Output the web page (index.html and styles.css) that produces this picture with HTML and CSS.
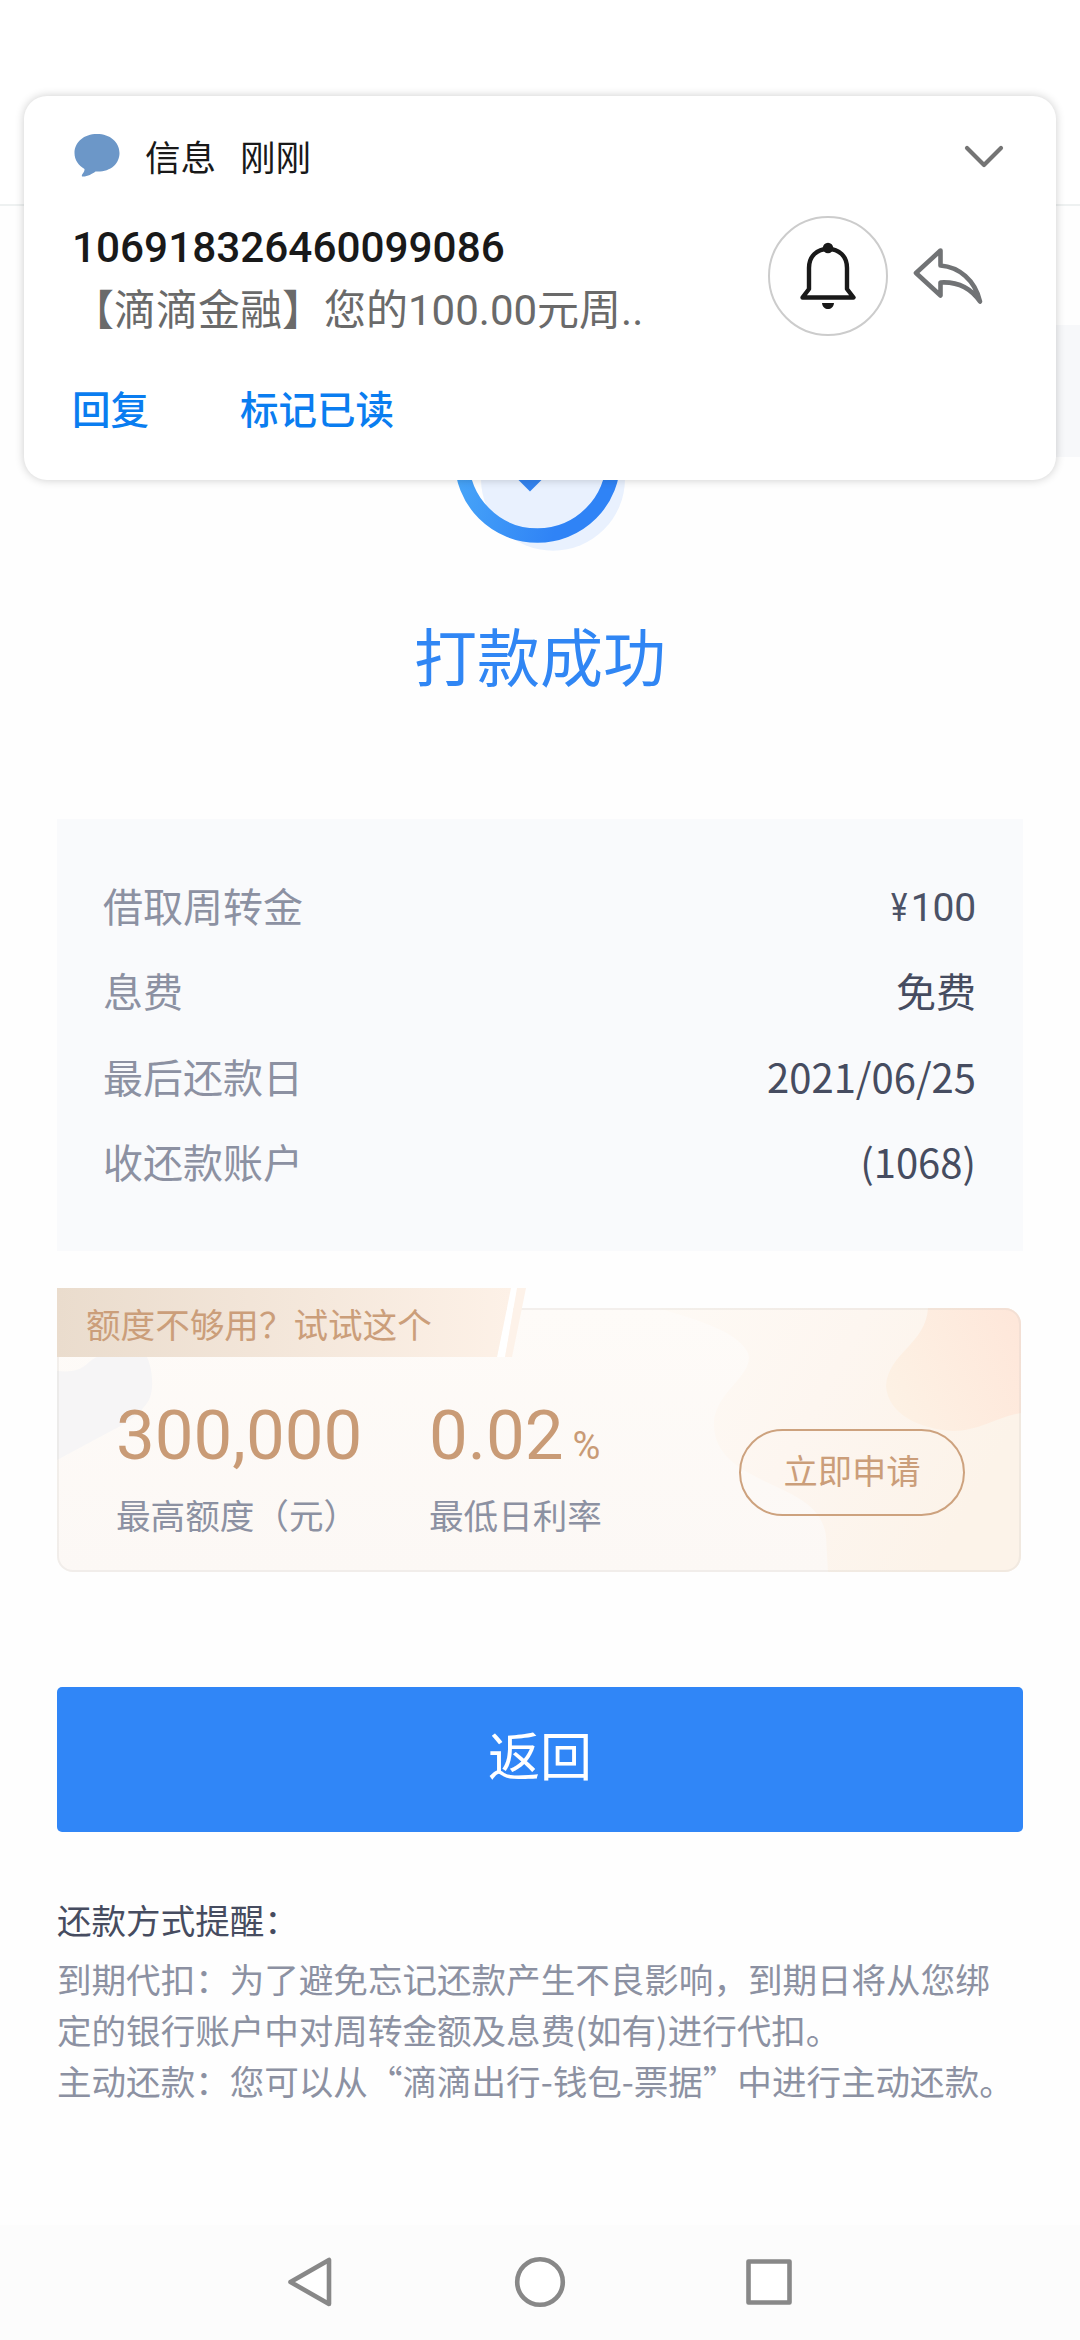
FILE: index.html
```html
<!DOCTYPE html>
<html lang="zh-CN">
<head>
<meta charset="utf-8">
<title>打款成功</title>
<link rel="stylesheet" href="styles.css">
</head>
<body>
<div class="screen">
  <header class="topbar"></header>
  <main class="page">
    <div class="strip"></div>
    <svg class="status-icon" width="180" height="184" viewBox="450 370 180 184">
      <defs>
        <linearGradient id="ring" x1="0" y1="0.3" x2="1" y2="0.6">
          <stop offset="0" stop-color="#4aa8f8"/>
          <stop offset="0.75" stop-color="#2f83f6"/>
        </linearGradient>
      </defs>
      <circle cx="553" cy="478.7" r="72" fill="#e9f1fe"/>
      <circle cx="537.5" cy="460" r="75.6" fill="none" stroke="url(#ring)" stroke-width="14.5"/>
      <path d="M498 451L530 483L580 433" fill="none" stroke="#3484f0" stroke-width="12"/>
    </svg>
    <h1 class="title">打款成功</h1>

    <dl class="details">
      <div class="row"><dt>借取周转金</dt><dd class="amount"><span>¥</span>100</dd></div>
      <div class="row"><dt>息费</dt><dd>免费</dd></div>
      <div class="row"><dt>最后还款日</dt><dd>2021/06/25</dd></div>
      <div class="row"><dt>收还款账户</dt><dd>(1068)</dd></div>
    </dl>

    <section class="promo">
      <svg class="promo-art" width="964" height="264" viewBox="0 0 964 264">
        <defs>
          <linearGradient id="wave" x1="0" y1="0" x2="1" y2="0.4">
            <stop offset="0" stop-color="#fefaf5"/>
            <stop offset="0.5" stop-color="#fdf6f0"/>
            <stop offset="1" stop-color="#fcf3e9"/>
          </linearGradient>
          <linearGradient id="petal" x1="0" y1="0.6" x2="1" y2="0.2">
            <stop offset="0" stop-color="#fdf1e4"/>
            <stop offset="1" stop-color="#fee7da"/>
          </linearGradient>
        </defs>
        <path d="M600 0C650 14 682 26 691 45C698 66 661 82 657 112C656 136 667 150 690 164C722 183 764 190 769 228L771 264H964V0Z" fill="url(#wave)"/>
        <path d="M871 0C869 36 831 45 829 78C831 106 862 121 896 123C922 123 940 109 964 105V0Z" fill="url(#petal)"/>
        <path d="M0 63C28 66 28 54 40 49H90C96 62 97 82 92 92C84 106 68 116 54 123L0 152Z" fill="#f6f5f6"/>
      </svg>
      <div class="ribbon">
        <svg class="ribbon-art" width="470" height="69" viewBox="0 0 470 69">
          <defs>
            <linearGradient id="tab" x1="0" y1="0" x2="1" y2="0">
              <stop offset="0" stop-color="#eadccd"/>
              <stop offset="1" stop-color="#fdf1e7"/>
            </linearGradient>
          </defs>
          <path d="M454 0H460L448 69H440Z" fill="#fff"/>
          <path d="M0 0H454L440 69H0Z" fill="url(#tab)"/>
          <path d="M460 0H469L455 69H448Z" fill="#fdf2e9"/>
        </svg>
        <span class="ribbon-text">额度不够用？试试这个</span>
      </div>
      <div class="promo-body">
        <div class="stat stat-limit"><div class="figure">300,000</div><div class="caption">最高额度（元）</div></div>
        <div class="stat stat-rate"><div class="figure">0.02<small>%</small></div><div class="caption">最低日利率</div></div>
        <button class="apply">立即申请</button>
      </div>
    </section>

    <button class="back">返回</button>

    <section class="notes">
      <h2>还款方式提醒：</h2>
      <p>到期代扣：为了避免忘记还款产生不良影响，到期日将从您绑<br>定的银行账户中对周转金额及息费(如有)进行代扣。</p>
      <p>主动还款：您可以从“滴滴出行-钱包-票据”中进行主动还款。</p>
    </section>
  </main>

  <nav class="navbar">
    <svg width="50" height="56" viewBox="0 0 50 56"><path d="M43 6V50L4.500 28Z" class="nav-line"/></svg>
    <svg width="56" height="56" viewBox="0 0 56 56"><circle cx="28" cy="28" r="22.800" class="nav-line"/></svg>
    <svg width="50" height="56" viewBox="0 0 50 56"><rect x="4.500" y="7.500" width="41" height="41" class="nav-line"/></svg>
  </nav>

  <aside class="notice">
    <div class="notice-head">
      <svg width="46" height="44" viewBox="0 0 46 44"><path d="M23 0C10 0 .5 8 .5 19C.5 26 4.500 31.500 10.500 35C11 38 7 40.500 8 42.500C13 43 18 40 21.500 37.500C36 38.500 45.500 30 45.500 19C45.500 8 36 0 23 0Z" fill="#6c97c8"/></svg>
      <span class="app">信息</span><span class="when">刚刚</span>
      <svg class="chevron" width="40" height="24" viewBox="0 0 40 24"><path d="M3 4L20 21L37 4" fill="none" stroke="#747474" stroke-width="4.200" stroke-linecap="round" stroke-linejoin="round"/></svg>
    </div>
    <div class="notice-main">
      <div class="notice-text">
        <div class="sender">106918326460099086</div>
        <div class="message">【滴滴金融】您的100.00元周..</div>
      </div>
      <div class="bell">
        <svg width="60" height="70" viewBox="0 0 60 70">
          <circle cx="30" cy="7" r="5.200" fill="#191919"/>
          <path d="M11 48V27C11 15 19 8 30 8S49 15 49 27V48L55.500 56.500H4.500Z" fill="none" stroke="#191919" stroke-width="4.400" stroke-linejoin="round"/>
          <path d="M24 62H36C35.500 66 33 68 30 68S24.500 66 24 62Z" fill="#191919"/>
        </svg>
      </div>
      <svg class="reply" width="74" height="60" viewBox="0 0 74 60"><path d="M28.500 4.500L4 27L28.500 49.500V36.500C45 35.500 58 41 68 55.500C63 34 47 21 28.500 19.500Z" fill="none" stroke="#717375" stroke-width="4.600" stroke-linejoin="round"/></svg>
    </div>
    <div class="notice-actions"><span>回复</span><span>标记已读</span></div>
  </aside>
</div>
</body>
</html>
```
FILE: styles.css
```css
* { box-sizing: border-box; margin: 0; padding: 0; }
body { width: 1080px; height: 2340px; background: #fff; font-family: "Noto Sans CJK SC", sans-serif; overflow: hidden; }
button { font: inherit; }
svg { display: block; flex: none; }

.screen { position: relative; width: 1080px; height: 2340px; display: flex; flex-direction: column; }
.topbar { height: 206px; flex: none; border-bottom: 2px solid #eef1f1; }
.page { flex: 1; display: flex; flex-direction: column; padding: 0 57px; background: #fefefe; }

.strip { flex: none; height: 132px; margin: 119px -57px 0 480px; background: #f7f8fa; }
.status-icon { margin: -87px 0 0 393px; }
.title { margin-top: 60px; height: 80px; line-height: 80px; text-align: center; font-size: 63px; font-weight: 400; color: #3086f4; }

.details { margin-top: 125px; height: 432px; padding: 43px 47px 0 46px; background: #f9fafc; }
.row { display: flex; justify-content: space-between; height: 85.300px; line-height: 86px; font-size: 40px; color: #8c91a2; }
.row dd { color: #464c60; }
.row .amount { display: flex; align-items: baseline; padding-top: 3px; font-family: Roboto, sans-serif; font-size: 39px; letter-spacing: -.2px; font-weight: 400; color: #4c5266; }
.amount span { margin-right: 2px; transform: scaleX(.8); }

.promo { position: relative; margin: 57px 2px 0 0; height: 264px; flex: none; border-radius: 16px; background: linear-gradient(180deg, #fefbf8, #fcf8f5); }
.promo::after { content: ""; position: absolute; inset: 0; border: 2px solid rgba(200, 195, 190, .2); border-radius: 16px; pointer-events: none; }
.promo-art { position: absolute; inset: 0; border-radius: 16px; }
.ribbon { position: absolute; z-index: 1; left: 0; top: -20px; width: 470px; height: 69px; padding-left: 29px; }
.ribbon-art { position: absolute; left: 0; top: 0; }
.ribbon-text { position: relative; font-size: 34.600px; line-height: 71px; color: #cb9e7a; white-space: nowrap; }
.promo-body { position: relative; display: flex; padding: 86px 56px 0 59px; }
.stat-limit { width: 313px; }
.figure { height: 84px; line-height: 84px; font-family: Roboto, sans-serif; font-size: 69px; color: #c99b76; white-space: nowrap; }
.figure small { margin-left: 9px; font-size: 38px; }
.caption { height: 50px; margin-top: 11px; line-height: 50px; font-size: 34.600px; color: #8c91a2; white-space: nowrap; }
.apply { width: 226px; height: 87px; margin: 35px 0 0 auto; padding-bottom: 6px; border: 2.500px solid #cda27e; border-radius: 44px; background: none; font-size: 34.300px; line-height: 1; color: #cb9e7a; }

.back { flex: none; height: 145px; margin-top: 115px; padding-bottom: 12px; border: 0; border-radius: 5px; background: #3086f7; color: #fff; font-size: 52px; }

.notes { padding-top: 58px; font-size: 34.560px; line-height: 51.200px; color: #8c91a2; white-space: nowrap; }
.notes h2 { height: 63px; line-height: 58px; font-size: 34.560px; font-weight: 400; color: #464c60; }

.navbar { flex: none; display: flex; justify-content: center; align-items: center; gap: 176px; height: 115px; padding-bottom: 1px; background: #fcfcfc; }
.nav-line { fill: #fff; stroke: #888; stroke-width: 4.600; stroke-linejoin: round; }

.notice { position: absolute; left: 24px; top: 96px; width: 1032px; height: 384px; padding: 30px 48px 0; border-radius: 23px; background: #fff; box-shadow: 0 0 10px rgba(0, 0, 0, .2); }
.notice-head { display: flex; align-items: center; height: 60px; padding-left: 2px; font-size: 35.500px; line-height: 60px; color: #191919; }
.app { margin-left: 25px; }
.when { margin-left: 24px; }
.chevron { margin-left: auto; margin-right: 4px; }
.notice-main { display: flex; align-items: center; height: 142px; margin-top: 19px; }
.notice-text { width: 696px; padding-top: 7px; white-space: nowrap; }
.sender { height: 62px; line-height: 62px; font-family: Roboto, sans-serif; font-size: 42.300px; font-weight: 500; color: #191919; }
.message { height: 64px; line-height: 64px; font-family: Roboto, "Noto Sans CJK SC", sans-serif; font-size: 42px; color: #6a6a6a; }
.bell { flex: none; display: flex; align-items: center; justify-content: center; width: 120px; height: 120px; border: 2.500px solid #ccc; border-radius: 50%; }
.reply { margin-left: 24px; }
.notice-actions { display: flex; gap: 91px; margin-top: 30px; line-height: 60px; font-size: 38.500px; font-weight: 500; color: #0a7df0; }
```
